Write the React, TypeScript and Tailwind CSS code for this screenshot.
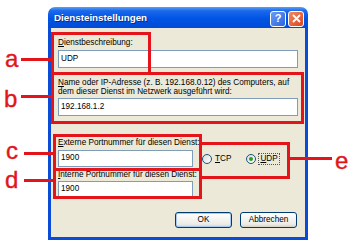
import React from "react";

const RED = "bg-[#e3151a]";

function Radio({ checked }: { checked?: boolean }) {
  return (
    <span className="relative inline-flex h-[10px] w-[10px] items-center justify-center rounded-full border border-[#1c5180] bg-[linear-gradient(135deg,#dcdcd6,#ffffff)]">
      {checked && <span className="h-[4px] w-[4px] rounded-full bg-[#21a121]" />}
    </span>
  );
}

export default function App() {
  return (
    <div className="relative h-[246px] w-[359px] overflow-hidden bg-white font-['Liberation_Sans',Arial,sans-serif] text-black">
      <div className="ml-[48px] pt-[7px]">
        <div className="flex h-[233px] w-[260px] flex-col">
          {/* Title bar */}
          <div className="flex h-[21px] items-center justify-between rounded-t-[7px] bg-[linear-gradient(180deg,#5aa0f7_0%,#1b69eb_18%,#0054e3_55%,#004bd6_100%)] pl-[6px] pr-[4px]">
            <span className="text-[9.8px] font-bold leading-none text-white [text-shadow:1px_1px_0_#0a2a8a]">
              Diensteinstellungen
            </span>
            <div className="mt-[2px] flex gap-[2px]">
              <div className="flex h-[16px] w-[16px] items-center justify-center rounded-[3px] border border-white bg-[linear-gradient(135deg,#6a9df5,#2a62e0)] text-[11px] font-bold leading-none text-white">
                ?
              </div>
              <div className="flex h-[16px] w-[16px] items-center justify-center rounded-[3px] border border-white bg-[linear-gradient(135deg,#f08a66,#d8461f)]">
                <svg width="9" height="9" viewBox="0 0 9 9">
                  <path d="M1 1 L8 8 M8 1 L1 8" stroke="white" strokeWidth="1.8" />
                </svg>
              </div>
            </div>
          </div>
          {/* Body */}
          <div className="flex flex-1 flex-col border-x-[3px] border-b-[3px] border-[#0a4bd8] bg-[#ece9d8] px-[7px] pt-[10px] text-[8.2px]">
            <div className="leading-[10px]">
              <span className="underline">D</span>ienstbeschreibung:
            </div>
            <div className="mt-[2px] flex h-[18px] items-center border border-[#7f9db9] bg-white pl-[2px]">UDP</div>

            <div className="mt-[10px] leading-[9px]">
              <div className="whitespace-nowrap">
                <span className="underline">N</span>ame oder IP-Adresse (z. B. 192.168.0.12) des Computers, auf
              </div>
              <div>dem dieser Dienst im Netzwerk ausgeführt wird:</div>
            </div>
            <div className="mt-[2px] flex h-[18px] items-center border border-[#7f9db9] bg-white pl-[2px]">192.168.1.2</div>

            <div className="mt-[22px] flex">
              <div className="flex w-[135px] flex-col">
                <div className="whitespace-nowrap leading-[9px]">
                  <span className="underline">E</span>xterne Portnummer für diesen Dienst:
                </div>
                <div className="mt-[3px] flex h-[17px] items-center border border-[#7f9db9] bg-white pl-[2px]">1900</div>
                <div className="mt-[3px] whitespace-nowrap leading-[9px]">
                  <span className="underline">I</span>nterne Portnummer für diesen Dienst:
                </div>
                <div className="mt-[2px] flex h-[17px] items-center border border-[#7f9db9] bg-white pl-[2px]">1900</div>
              </div>
              <div className="ml-[9px] mt-[15px] flex h-[12px] items-center self-start">
                <Radio />
                <span className="ml-[3px]">
                  <span className="underline">T</span>CP
                </span>
                <span className="ml-[15px]">
                  <Radio checked />
                </span>
                <span className="ml-[2px] border border-dotted border-[#555] px-[1px] leading-[10px]">
                  <span className="underline">U</span>DP
                </span>
              </div>
            </div>

            <div className="mt-[14px] flex justify-end gap-[8px] pr-[1px]">
              <div className="flex h-[16px] w-[57px] items-center justify-center rounded-[3px] border border-[#003c74] bg-[linear-gradient(180deg,#ffffff,#ecebe6_80%,#d6d0c5)] shadow-[inset_0_0_0_1px_#a6caf0]">
                OK
              </div>
              <div className="flex h-[16px] w-[57px] items-center justify-center rounded-[3px] border border-[#003c74] bg-[linear-gradient(180deg,#ffffff,#ecebe6_80%,#d6d0c5)]">
                Abbrechen
              </div>
            </div>
          </div>
        </div>
      </div>

      {/* Annotation overlays */}
      <div className="absolute left-[51px] top-[32px] h-[43px] w-[100px] border-[3px] border-[#e3151a]" />
      <div className="absolute left-[51px] top-[72px] h-[52px] w-[253px] border-[3px] border-[#e3151a]" />
      <div className="absolute left-[53px] top-[134px] h-[37px] w-[149px] border-[3px] border-[#e3151a]" />
      <div className="absolute left-[53px] top-[168px] h-[31px] w-[149px] border-[3px] border-[#e3151a]" />
      <div className="absolute left-[199px] top-[142px] h-[37px] w-[91px] border-[3px] border-[#e3151a]" />

      <div className={`absolute left-[21px] top-[58px] h-[3px] w-[31px] ${RED}`} />
      <div className={`absolute left-[21px] top-[95px] h-[3px] w-[31px] ${RED}`} />
      <div className={`absolute left-[24px] top-[152px] h-[3px] w-[30px] ${RED}`} />
      <div className={`absolute left-[24px] top-[179px] h-[3px] w-[30px] ${RED}`} />
      <div className={`absolute left-[290px] top-[157px] h-[3px] w-[42px] ${RED}`} />

      <div className="absolute left-[5px] top-[49px] text-[24px] font-[500] leading-[20px] text-[#e3151a] [-webkit-text-stroke:0.4px_#e3151a]">a</div>
      <div className="absolute left-[4px] top-[89px] text-[24px] leading-[20px] text-[#e3151a] [-webkit-text-stroke:0.4px_#e3151a]">b</div>
      <div className="absolute left-[6px] top-[141px] text-[24px] leading-[20px] text-[#e3151a] [-webkit-text-stroke:0.4px_#e3151a]">c</div>
      <div className="absolute left-[5px] top-[170px] text-[24px] leading-[20px] text-[#e3151a] [-webkit-text-stroke:0.4px_#e3151a]">d</div>
      <div className="absolute left-[335px] top-[151px] text-[24px] leading-[20px] text-[#e3151a] [-webkit-text-stroke:0.4px_#e3151a]">e</div>
    </div>
  );
}
